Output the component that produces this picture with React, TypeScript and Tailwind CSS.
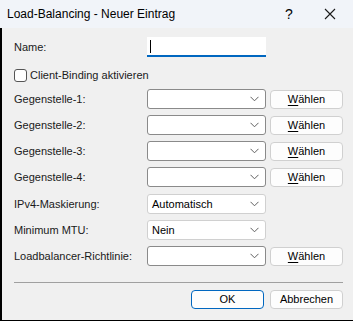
import React from "react";

const Chevron = () => (
  <svg width="9" height="6" viewBox="0 0 9 6" className="text-[#606060]">
    <path d="M0.5 0.8 L4.5 4.8 L8.5 0.8" fill="none" stroke="currentColor" strokeWidth="1" />
  </svg>
);

const Combo = ({ value, light }: { value?: string; light?: boolean }) => (
  <div
    className={`w-[119px] h-[20px] flex items-center justify-between pl-[4px] pr-[6px] bg-white rounded-[3px] border ${
      light ? "border-[#d0d0d0]" : "border-[#8a8a8a]"
    }`}
  >
    <span className="text-[11px] text-black">{value}</span>
    <Chevron />
  </div>
);

const Btn = ({ children, primary }: { children: React.ReactNode; primary?: boolean }) => (
  <div
    className={`w-[73px] h-[19px] flex items-center justify-center bg-[#fdfdfd] rounded-[4px] border text-[11px] text-black ${
      primary ? "border-[#0067c0]" : "border-[#d0d0d0]"
    }`}
  >
    {children}
  </div>
);

const Waehlen = () => (
  <Btn>
    <span>
      <span className="underline underline-offset-2">W</span>ählen
    </span>
  </Btn>
);

const Row = ({ label, children }: { label: string; children: React.ReactNode }) => (
  <div className="flex items-center h-[20px]">
    <span className="w-[133px] text-[11px] text-[#1a1a1a]">{label}</span>
    <div className="flex items-center gap-[4px]">{children}</div>
  </div>
);

export default function App() {
  const rows = ["Gegenstelle-1:", "Gegenstelle-2:", "Gegenstelle-3:", "Gegenstelle-4:"];
  return (
    <div
      className="w-[353px] h-[321px] flex flex-col bg-[#f0f0f0] overflow-hidden"
      style={{ fontFamily: '"Liberation Sans", Arial, sans-serif' }}
    >
      <div className="h-[28px] shrink-0 flex items-center bg-[#f1f4f9] pl-[7px]">
        <span className="text-[12px] text-black flex-1">Load-Balancing - Neuer Eintrag</span>
        <span className="w-[20px] text-center text-[14px] text-black mr-[25px]">?</span>
        <svg width="12" height="12" viewBox="0 0 12 12" className="mr-[17px]">
          <path d="M1 1 L11 11 M11 1 L1 11" stroke="#1a1a1a" strokeWidth="1.1" />
        </svg>
      </div>
      <div className="flex-1 flex flex-col border-l-[2px] border-b border-black pl-[12px] pr-[8px]">
        <div className="flex items-center h-[20px] mt-[9px]">
          <span className="w-[133px] text-[11px] text-[#1a1a1a]">Name:</span>
          <div className="w-[119px] h-[20px] bg-white border-b-[2px] border-[#0067c0] flex items-center pl-[3px]">
            <div className="w-[1px] h-[13px] bg-black" />
          </div>
        </div>
        <div className="flex items-center gap-[3px] mt-[10px] h-[16px]">
          <div className="w-[13px] h-[13px] rounded-[3px] border border-[#555] bg-white" />
          <span className="text-[11px] text-[#1a1a1a]">Client-Binding aktivieren</span>
        </div>
        <div className="flex flex-col gap-[6px] mt-[6px]">
          {rows.map((r) => (
            <Row key={r} label={r}>
              <Combo />
              <Waehlen />
            </Row>
          ))}
          <div className="mt-[1px]">
            <Row label="IPv4-Maskierung:">
              <Combo value="Automatisch" light />
            </Row>
          </div>
          <Row label="Minimum MTU:">
            <Combo value="Nein" light />
          </Row>
          <Row label="Loadbalancer-Richtlinie:">
            <Combo />
            <Waehlen />
          </Row>
        </div>
        <div className="h-[1px] bg-[#a0a0a0] mt-[16px] mr-[2px]" />
        <div className="flex justify-end gap-[6px] mt-[7px] pr-[2px]">
          <Btn primary>OK</Btn>
          <Btn>Abbrechen</Btn>
        </div>
      </div>
    </div>
  );
}
